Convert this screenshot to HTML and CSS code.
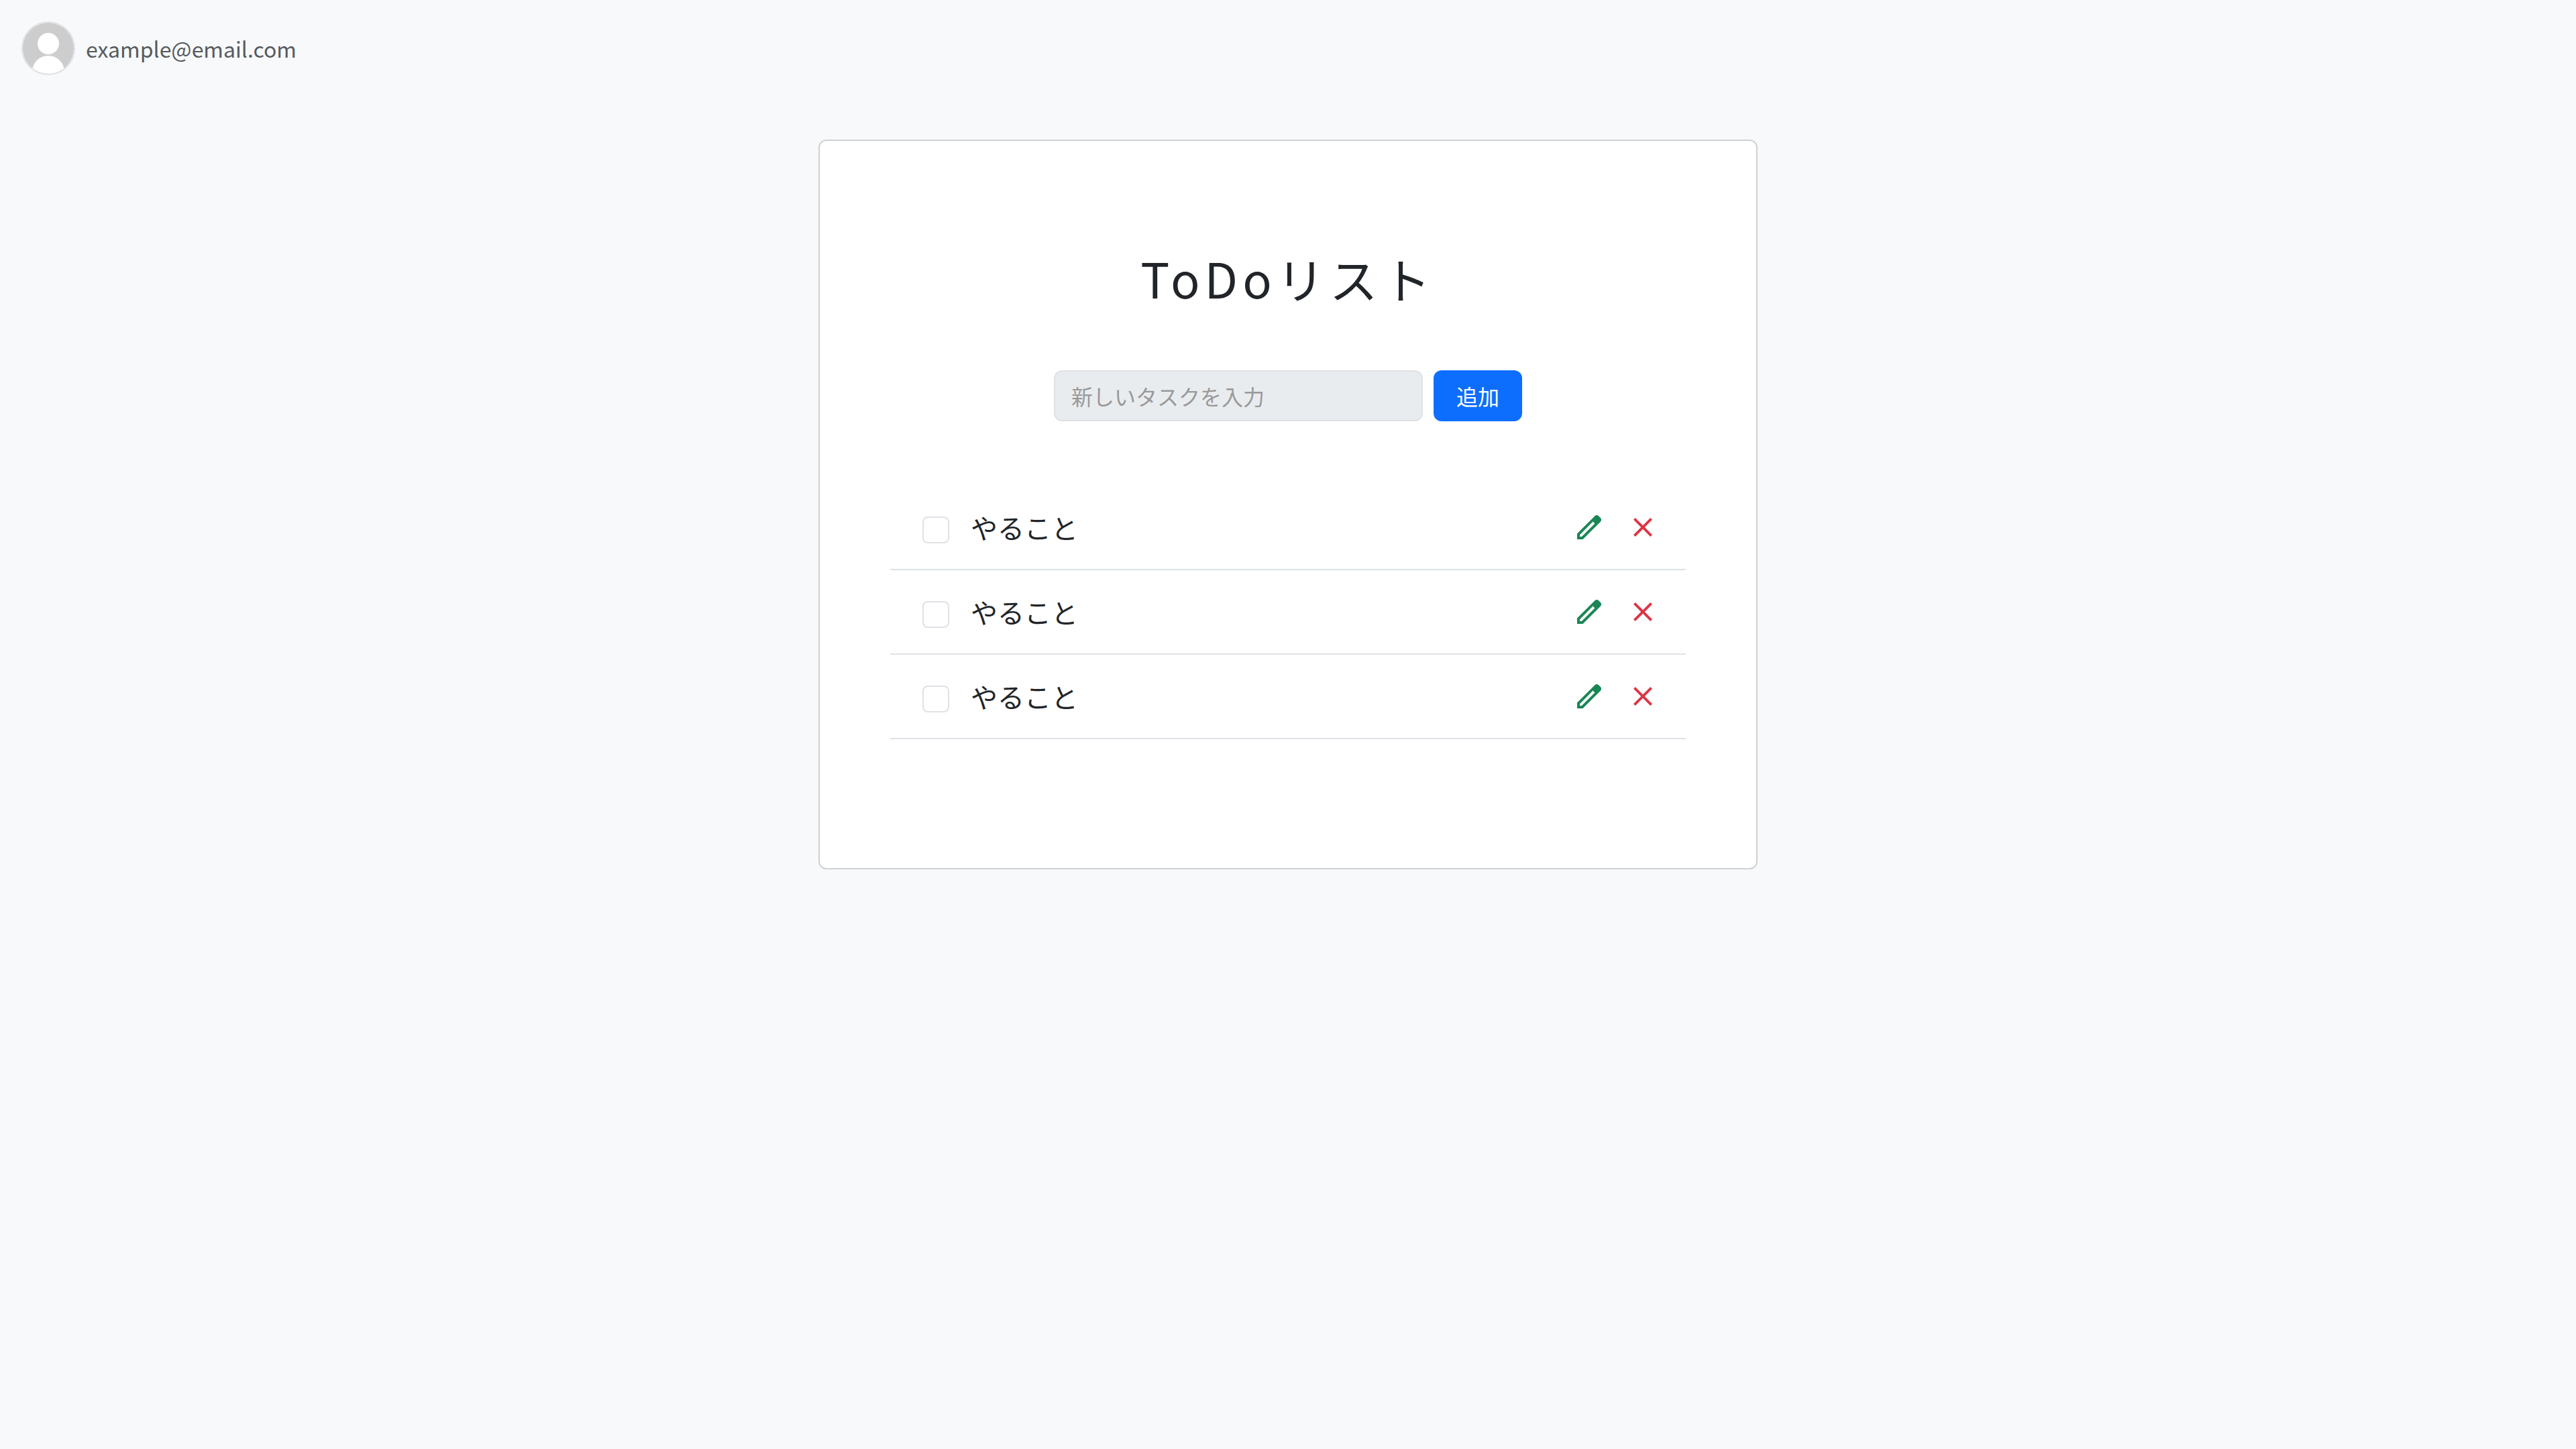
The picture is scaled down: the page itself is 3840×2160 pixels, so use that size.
FILE: index.html
```html
<!DOCTYPE html>
<html lang="ja">
<head>
<meta charset="utf-8">
<meta name="viewport" content="width=device-width, initial-scale=1">
<title>ToDoリスト</title>
<link rel="stylesheet" href="styles.css">
</head>
<body>
<svg class="sprite" aria-hidden="true">
  <symbol id="icon-edit" viewBox="0 -960 960 960"><path d="M200-200h57l391-391-57-57-391 391v57Zm-80 80v-170l528-527q12-11 26.5-17t30.5-6q16 0 31 6t26 18l55 56q12 11 17.5 26t5.5 30q0 16-5.5 30.500T817-647L290-120H120Zm640-584-56-56 56 56Zm-141 85-28-29 57 57-29-28Z"/></symbol>
  <symbol id="icon-close" viewBox="0 -960 960 960"><path d="m256-200-56-56 224-224-224-224 56-56 224 224 224-224 56 56-224 224 224 224-56 56-224-224-224 224Z"/></symbol>
</svg>
<header class="user">
  <svg class="avatar" viewBox="0 0 76 76" aria-hidden="true">
    <rect width="76" height="76" fill="#cdcdcd"/>
    <circle cx="38" cy="31" r="16" fill="#fff"/>
    <circle cx="38" cy="73" r="24" fill="#fff"/>
  </svg>
  <span class="email">example@email.com</span>
</header>
<main class="card">
  <h1 class="title">ToDoリスト</h1>
  <form class="add-form">
    <input class="task-input" type="text" placeholder="新しいタスクを入力" aria-label="新しいタスク">
    <button class="add-button" type="button">追加</button>
  </form>
  <ul class="tasks">
    <li class="task">
      <input class="check" type="checkbox" id="task-1">
      <label class="label" for="task-1">やること</label>
      <button class="icon-button edit" type="button" aria-label="編集"><svg class="icon"><use href="#icon-edit"/></svg></button>
      <button class="icon-button delete" type="button" aria-label="削除"><svg class="icon"><use href="#icon-close"/></svg></button>
    </li>
    <li class="task">
      <input class="check" type="checkbox" id="task-2">
      <label class="label" for="task-2">やること</label>
      <button class="icon-button edit" type="button" aria-label="編集"><svg class="icon"><use href="#icon-edit"/></svg></button>
      <button class="icon-button delete" type="button" aria-label="削除"><svg class="icon"><use href="#icon-close"/></svg></button>
    </li>
    <li class="task">
      <input class="check" type="checkbox" id="task-3">
      <label class="label" for="task-3">やること</label>
      <button class="icon-button edit" type="button" aria-label="編集"><svg class="icon"><use href="#icon-edit"/></svg></button>
      <button class="icon-button delete" type="button" aria-label="削除"><svg class="icon"><use href="#icon-close"/></svg></button>
    </li>
  </ul>
</main>
</body>
</html>
```
FILE: styles.css
```css
*,
*::before,
*::after {
  box-sizing: border-box;
}

body {
  margin: 0;
  min-height: 100vh;
  background: #f8f9fb;
  color: #212529;
  font-family: "Noto Sans CJK JP", sans-serif;
  font-size: 32px;
  line-height: 48px;
}

.sprite {
  display: none;
}

.user {
  display: flex;
  align-items: center;
  gap: 16px;
  padding: 32px;
}

.avatar {
  width: 80px;
  height: 80px;
  border: 2px solid #dee2e6;
  border-radius: 50%;
}

.email {
  color: #555b5e;
}

.card {
  max-width: 1400px;
  margin: 64px auto 0;
  padding: 156px 105px 192px;
  background: #fff;
  border: 2px solid #d0d1d2;
  border-radius: 12px;
}

.title {
  margin: 0 0 90px;
  font-size: 72px;
  font-weight: 400;
  line-height: 96px;
  letter-spacing: 7px;
  text-align: center;
}

.add-form {
  display: flex;
  justify-content: center;
  gap: 16px;
}

.task-input {
  width: 550px;
  height: 76px;
  padding: 0 24px;
  background: #e9ecef;
  border: 2px solid #dee2e6;
  border-radius: 12px;
  color: inherit;
  font: inherit;
}

.task-input::placeholder {
  color: #999;
  opacity: 1;
}

.add-button {
  height: 76px;
  padding: 0 34px;
  background: #0d6efd;
  border: 0;
  border-radius: 12px;
  color: #fff;
  font: inherit;
}

.tasks {
  margin: 96px 0 0;
  padding: 0;
  list-style: none;
}

.task {
  display: flex;
  align-items: center;
  height: 126px;
  padding: 0 40px 0 48px;
  border-bottom: 2px solid #dee2e6;
}

.check {
  appearance: none;
  width: 40px;
  height: 40px;
  margin: 8px 32px 0 0;
  background: #fff;
  border: 2px solid #dee2e6;
  border-radius: 8px;
}

.check:checked {
  background: #0d6efd;
}

.label {
  flex: 1;
  font-size: 40px;
  line-height: 60px;
}

.icon-button {
  display: flex;
  padding: 0;
  background: none;
  border: 0;
}

.icon-button + .icon-button {
  margin-left: 32px;
}

.edit {
  color: #198754;
}

.delete {
  color: #dc3545;
}

.icon {
  width: 48px;
  height: 48px;
  fill: currentColor;
}
```
